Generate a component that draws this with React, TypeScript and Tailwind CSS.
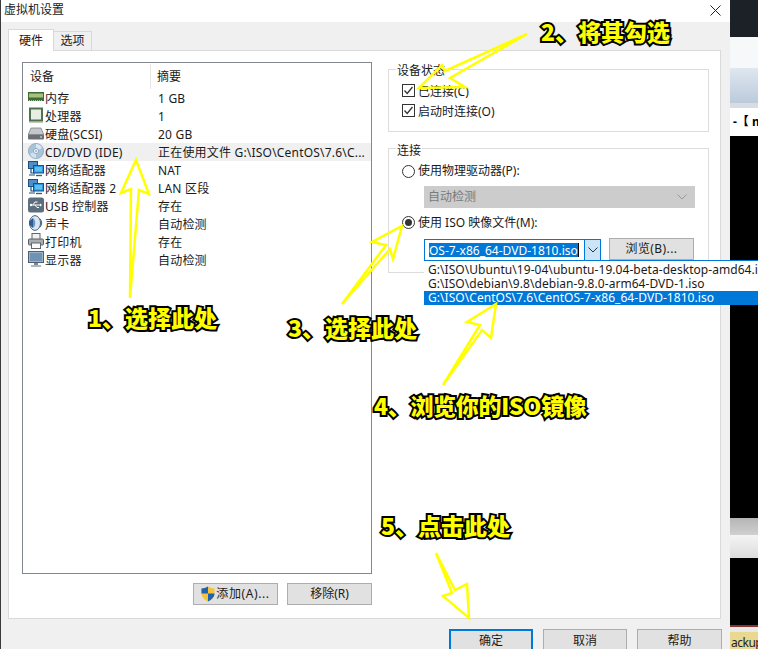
import { ReactNode } from "react";

function MemoryIcon() {
  return (
    <svg width="16" height="16" viewBox="0 0 16 16">
      <rect x="0" y="3" width="16" height="9" fill="#3f6b35" />
      <rect x="1" y="4" width="14" height="5" fill="#6f9a4a" />
      <path d="M2 5v3M4 5v3M6 5v3M8 5v3M10 5v3M12 5v3M14 5v3" stroke="#dfe8b8" strokeWidth="1" />
      <path d="M1 11.5h14" stroke="#c8c070" strokeWidth="1" strokeDasharray="1 1" />
    </svg>
  );
}

function CpuIcon() {
  return (
    <svg width="16" height="16" viewBox="0 0 16 16">
      <rect x="2" y="1.5" width="12" height="12" fill="#e8efe2" stroke="#4f7350" strokeWidth="2" />
      <path d="M1 15h14" stroke="#8a9a8a" strokeWidth="1" />
    </svg>
  );
}

function DiskIcon() {
  return (
    <svg width="16" height="16" viewBox="0 0 16 16">
      <path d="M3 3h10l3 7H0z" fill="#c4c8cc" stroke="#70767c" strokeWidth="0.7" />
      <rect x="0" y="9.5" width="16" height="5" rx="1" fill="#6b7075" />
      <rect x="12" y="11.5" width="2" height="1" fill="#e0e4e8" />
    </svg>
  );
}

function CdIcon() {
  return (
    <svg width="16" height="16" viewBox="0 0 16 16">
      <circle cx="8" cy="8" r="7.6" fill="#a8c4da" stroke="#7f9db5" strokeWidth="0.7" />
      <path d="M8 1a7 7 0 0 1 6 4L8 8z" fill="#d9e7f1" />
      <path d="M8 15a7 7 0 0 1-6-4l6-3z" fill="#d2e1ed" />
      <circle cx="8" cy="8" r="2.6" fill="#eef4f8" stroke="#7f9db5" strokeWidth="0.8" />
      <circle cx="8" cy="8" r="0.9" fill="#8aa5ba" />
    </svg>
  );
}

function NetworkIcon() {
  return (
    <svg width="16" height="16" viewBox="0 0 16 16">
      <rect x="0.5" y="0.5" width="9" height="7" fill="#4f8fc8" stroke="#1f4f80" />
      <path d="M3 8v4h4M1 14h6" stroke="#1f4f80" strokeWidth="1.2" fill="none" />
      <rect x="5.5" y="4.5" width="10" height="7.5" fill="#2a97e0" stroke="#1f4f80" />
      <rect x="7" y="6" width="7" height="4.5" fill="#5cc0f0" />
      <path d="M8 14.5h6" stroke="#35607f" strokeWidth="1.4" />
    </svg>
  );
}

function UsbIcon() {
  return (
    <svg width="16" height="16" viewBox="0 0 16 16">
      <rect x="0" y="0.5" width="16" height="15" rx="2.5" fill="#5d6e7e" />
      <path d="M2.5 8h10M5 8l2-3h2.5M7 8l2 2.5h2" stroke="#fff" strokeWidth="1" fill="none" />
      <path d="M12 6.5l2 1.5-2 1.5z" fill="#fff" />
      <circle cx="3" cy="8" r="1.2" fill="#fff" />
    </svg>
  );
}

function SoundIcon() {
  return (
    <svg width="16" height="16" viewBox="0 0 16 16">
      <ellipse cx="7" cy="8" rx="5.5" ry="7.4" fill="#dce6f0" stroke="#48688c" strokeWidth="1" />
      <path d="M5 3L1 6.5v3L5 13z" fill="#2f5c92" />
      <path d="M5 3c3 2 3 8 0 10z" fill="#6f97c4" />
      <path d="M12 4c2 2.5 2 5.500 0 8" stroke="#48688c" strokeWidth="1.200" fill="none" />
    </svg>
  );
}

function PrinterIcon() {
  return (
    <svg width="16" height="16" viewBox="0 0 16 16">
      <rect x="4" y="0.500" width="8" height="6" fill="#f2f2f2" stroke="#60656a" />
      <rect x="0.500" y="6" width="15" height="6" rx="1" fill="#a8adb2" stroke="#5c6166" />
      <rect x="3.500" y="10" width="9" height="5.500" fill="#fafafa" stroke="#60656a" />
    </svg>
  );
}

function MonitorIcon() {
  return (
    <svg width="16" height="16" viewBox="0 0 16 16">
      <rect x="0.500" y="0.500" width="15" height="11" fill="#9db4c8" stroke="#4f5f70" />
      <rect x="2" y="2" width="12" height="8" fill="#6f93b4" />
      <path d="M6 12h4v2H6z" fill="#7a8794" />
      <path d="M3 15h10" stroke="#8b97a3" strokeWidth="1.400" />
    </svg>
  );
}

function ShieldIcon() {
  return (
    <svg width="14" height="16" viewBox="0 0 14 16">
      <path d="M7 0.500c2 1.300 4 2 6.500 2v5c0 3.500-2.500 6-6.500 8-4-2-6.500-4.500-6.500-8v-5c2.500 0 4.500-.7 6.500-2z" fill="#f5c33b" />
      <path d="M7 0.500v7H0.500v-5C3 2.500 5 1.800 7 0.500zM7 7.500h6.500c0 3.500-2.500 6-6.500 8z" fill="#1f62b0" />
    </svg>
  );
}

function Chevron({ color }: { color: string }) {
  return (
    <svg width="10" height="6" viewBox="0 0 10 6">
      <path d="M0.500 0.500L5 5l4.500-4.500" stroke={color} strokeWidth="1" fill="none" />
    </svg>
  );
}

function Checkbox() {
  return (
    <div className="w-[13px] h-[13px] border border-[#333333] bg-white flex items-center justify-center shrink-0">
      <svg width="11" height="11" viewBox="0 0 11 11">
        <path d="M1.500 5.500L4.200 8.500 9.500 2" stroke="#333333" strokeWidth="1.300" fill="none" />
      </svg>
    </div>
  );
}

function Radio({ checked }: { checked?: boolean }) {
  return (
    <div className="w-[13px] h-[13px] rounded-full border border-[#333333] bg-white flex items-center justify-center shrink-0">
      {checked && <div className="w-[7px] h-[7px] rounded-full bg-[#333333]" />}
    </div>
  );
}

function GrayButton({ children, className }: { children: ReactNode; className: string }) {
  return (
    <div className={`bg-[#e1e1e1] flex items-center justify-center leading-[20px] ${className}`}>
      {children}
    </div>
  );
}

const devices = [
  { icon: <MemoryIcon />, name: "内存", summary: "1 GB" },
  { icon: <CpuIcon />, name: "处理器", summary: "1" },
  { icon: <DiskIcon />, name: "硬盘(SCSI)", summary: "20 GB" },
  { icon: <CdIcon />, name: "CD/DVD (IDE)", summary: "正在使用文件 G:\\ISO\\CentOS\\7.6\\C...", selected: true },
  { icon: <NetworkIcon />, name: "网络适配器", summary: "NAT" },
  { icon: <NetworkIcon />, name: "网络适配器 2", summary: "LAN 区段" },
  { icon: <UsbIcon />, name: "USB 控制器", summary: "存在" },
  { icon: <SoundIcon />, name: "声卡", summary: "自动检测" },
  { icon: <PrinterIcon />, name: "打印机", summary: "存在" },
  { icon: <MonitorIcon />, name: "显示器", summary: "自动检测" },
];

const arrows = [
  "130,298 131,189 121,193 136,160 149,194 139,190",
  "527,34 445,71 442,65 419,88 465,87 450,78",
  "342,304 386,245 372,242 402,226 393,259 390,249",
  "443,385 480,325 467,322 496,304 491,338 482,330",
  "436,553 452,593 443,596 469,618 467,584 455,590",
];

const labels = [
  { text: "1、选择此处", pos: "left-[88px] top-[302px]" },
  { text: "2、将其勾选", pos: "left-[541px] top-[16px]" },
  { text: "3、选择此处", pos: "left-[288px] top-[312px]" },
  { text: "4、浏览你的ISO镜像", pos: "left-[374px] top-[390px] tracking-[-0.3px]" },
  { text: "5、点击此处", pos: "left-[381px] top-[510px]" },
];

export default function App() {
  return (
    <div className="relative w-[758px] h-[649px] flex overflow-hidden bg-black text-[12px] leading-[16px] text-[#1a1a1a] font-['Noto_Sans','Noto_Sans_CJK_SC',sans-serif]">
      {/* dialog */}
      <div className="w-[730px] shrink-0 flex flex-col border-l border-[#3a3a3a]">
        <div className="h-[22px] bg-white flex items-center justify-between pl-[3px] pr-[9px] pb-[2px]">
          <span>虚拟机设置</span>
          <svg width="11" height="11" viewBox="0 0 11 11">
            <path d="M0.500 0.500l10 10M10.500 0.500l-10 10" stroke="#222222" strokeWidth="1" />
          </svg>
        </div>

        <div className="flex-1 min-h-0 bg-[#f0f0f0] pl-[7px] pr-[8px] pt-[7px] flex flex-col">
          <div className="h-[22px] flex items-end -mb-px shrink-0">
            <div className="relative z-10 w-[46px] h-[22px] bg-white border border-b-0 border-[#d9d9d9] flex items-center justify-center">
              硬件
            </div>
            <div className="w-[38px] h-[19px] mb-px bg-[#f0f0f0] border border-l-0 border-b-0 border-[#d9d9d9] flex items-center justify-center leading-[18px]">
              选项
            </div>
          </div>

          <div className="h-[569px] shrink-0 mr-px bg-white border border-[#d9d9d9] pl-[13px] pt-[11px] flex">
            {/* device list */}
            <div className="w-[350px] shrink-0 flex flex-col">
              <div className="h-[512px] border border-[#828790] bg-white">
                <div className="h-[25px] mt-px grid grid-cols-[128px_1fr] leading-[18px]">
                  <div className="pl-[7px] flex items-center border-r border-[#e5e5e5]">设备</div>
                  <div className="pl-[6px] flex items-center">摘要</div>
                </div>
                {devices.map((device) => (
                  <div
                    key={device.summary + device.name}
                    className={`h-[18px] grid grid-cols-[135px_1fr] items-start leading-[20px] tracking-[0.2px] ${device.selected ? "bg-[#f0f0f0]" : ""}`}
                  >
                    <div className="h-[18px] pl-[5px] flex items-start gap-[1px] whitespace-nowrap">
                      {device.icon}
                      <span className="h-[18px]">{device.name}</span>
                    </div>
                    <span className="h-[18px] whitespace-nowrap">{device.summary}</span>
                  </div>
                ))}
              </div>
              <div className="mt-[9px] flex justify-end gap-[9px]">
                <GrayButton className="w-[85px] h-[22px] gap-[1px] border border-[#adadad] tracking-[0.6px]">
                  <ShieldIcon />
                  <span>添加(A)...</span>
                </GrayButton>
                <GrayButton className="w-[85px] h-[22px] border border-[#adadad]">移除(R)</GrayButton>
              </div>
            </div>

            {/* right side */}
            <div className="ml-[16px] w-[321px] shrink-0 pt-[7px]">
              <div className="h-[63px] border border-[#dcdcdc]">
                <div className="-mt-[7px] ml-[7px] px-[1px] bg-white w-fit">设备状态</div>
                <div className="mt-[1px] pl-[13px]">
                  <div className="h-[20px] flex items-center gap-[3px]">
                    <Checkbox />
                    <span className="pt-[4px]">已连接(C)</span>
                  </div>
                  <div className="h-[20px] flex items-center gap-[3px]">
                    <Checkbox />
                    <span className="pt-[4px]">启动时连接(O)</span>
                  </div>
                </div>
              </div>

              <div className="mt-[16px] h-[125px] border border-[#dcdcdc]">
                <div className="-mt-[6px] ml-[7px] px-[1px] bg-white w-fit">连接</div>
                <div className="mt-[2px] pl-[13px] h-[20px] flex items-center gap-[3px]">
                  <Radio />
                  <span>使用物理驱动器(P):</span>
                </div>
                <div className="mt-[5px] ml-[35px] w-[271px] h-[22px] bg-[#cccccc] flex items-center justify-between pl-[4px] pr-[8px] text-[#7a7a7a] leading-[20px]">
                  <span>自动检测</span>
                  <Chevron color="#9a9a9a" />
                </div>
                <div className="mt-[4px] pl-[13px] h-[20px] flex items-center gap-[3px]">
                  <Radio checked />
                  <span className="pt-[2px]">使用 ISO 映像文件(M):</span>
                </div>
                <div className="mt-[7px] ml-[35px] flex items-start">
                  <div className="relative w-[177px] h-[22px] border border-[#0078d7] bg-white flex items-center">
                    <span className="ml-[4px] w-[150px] h-[14px] leading-[15px] bg-[#0078d7] text-white whitespace-nowrap overflow-hidden border-r border-black">
                      OS-7-x86_64-DVD-1810.iso
                    </span>
                    <div className="ml-auto w-[16px] h-full bg-[#cce4f7] border-l border-[#0078d7] flex items-center justify-center">
                      <Chevron color="#333333" />
                    </div>
                    <div className="absolute z-20 -left-px top-[20px] w-[340px] bg-white border-t border-[#0078d7] pt-[2px] whitespace-nowrap tracking-[0.05px]">
                      <div className="h-[14px] leading-[14px] pl-[4px]">G:\ISO\Ubuntu\19-04\ubuntu-19.04-beta-desktop-amd64.iso</div>
                      <div className="h-[14px] leading-[14px] pl-[4px]">G:\ISO\debian\9.8\debian-9.8.0-arm64-DVD-1.iso</div>
                      <div className="h-[14px] leading-[14px] pl-[4px] bg-[#0078d7] text-white">G:\ISO\CentOS\7.6\CentOS-7-x86_64-DVD-1810.iso</div>
                    </div>
                  </div>
                  <GrayButton className="ml-[8px] -mt-px w-[85px] h-[22px] border border-[#adadad] tracking-[0.4px]">浏览(B)...</GrayButton>
                </div>
              </div>
            </div>
          </div>

          <div className="pt-[10px] flex justify-end gap-[10px]">
            <GrayButton className="w-[84px] h-[24px] shrink-0 border-2 border-[#0078d7]">确定</GrayButton>
            <GrayButton className="w-[84px] h-[24px] shrink-0 border border-[#adadad]">取消</GrayButton>
            <GrayButton className="w-[85px] h-[24px] shrink-0 border border-[#adadad]">帮助</GrayButton>
          </div>
        </div>
      </div>

      {/* window behind the dialog */}
      <div className="flex-1 flex flex-col">
        <div className="h-[37px] bg-[#1b2126]" />
        <div className="h-[31px] bg-[#f7f8f9]" />
        <div className="h-[35px] bg-gradient-to-b from-[#dfe7f0] to-[#bccadb]" />
        <div className="h-[5px] bg-[#d8dde3]" />
        <div className="h-[28px] bg-white flex items-center pl-[3px] font-bold text-black whitespace-nowrap overflow-hidden">
          -【 m
        </div>
        <div className="h-[382px] bg-black" />
        <div className="h-[17px] bg-gradient-to-b from-[#b5b5b5] to-[#d0d0d0]" />
        <div className="h-[23px] bg-gradient-to-b from-[#f4f4f4] to-[#dcdcdc]" />
        <div className="h-[67px] bg-black" />
        <div className="h-[2px] bg-[#8a3030]" />
        <div className="h-[5px] bg-[#e8e8e8]" />
        <div className="flex-1 bg-[#e9d88f] pl-[1px] pt-[3px] text-[12px] tracking-[-0.5px] text-[#222222] overflow-hidden whitespace-nowrap">ackup</div>
      </div>

      {/* tutorial annotations */}
      <svg className="absolute z-30 left-0 top-0 pointer-events-none" width="758" height="649" viewBox="0 0 758 649">
        {arrows.map((points) => (
          <polygon key={points} points={points} fill="none" stroke="#ffff00" strokeWidth="2.500" strokeLinejoin="miter" />
        ))}
      </svg>
      {labels.map((label) => (
        <div
          key={label.text}
          className={`absolute z-40 ${label.pos} h-[30px] leading-[30px] text-[23px] font-black whitespace-nowrap text-[#ffff00] font-['Noto_Sans_CJK_SC',sans-serif] [-webkit-text-stroke:4px_#000000] [paint-order:stroke_fill]`}
        >
          {label.text}
        </div>
      ))}
    </div>
  );
}
